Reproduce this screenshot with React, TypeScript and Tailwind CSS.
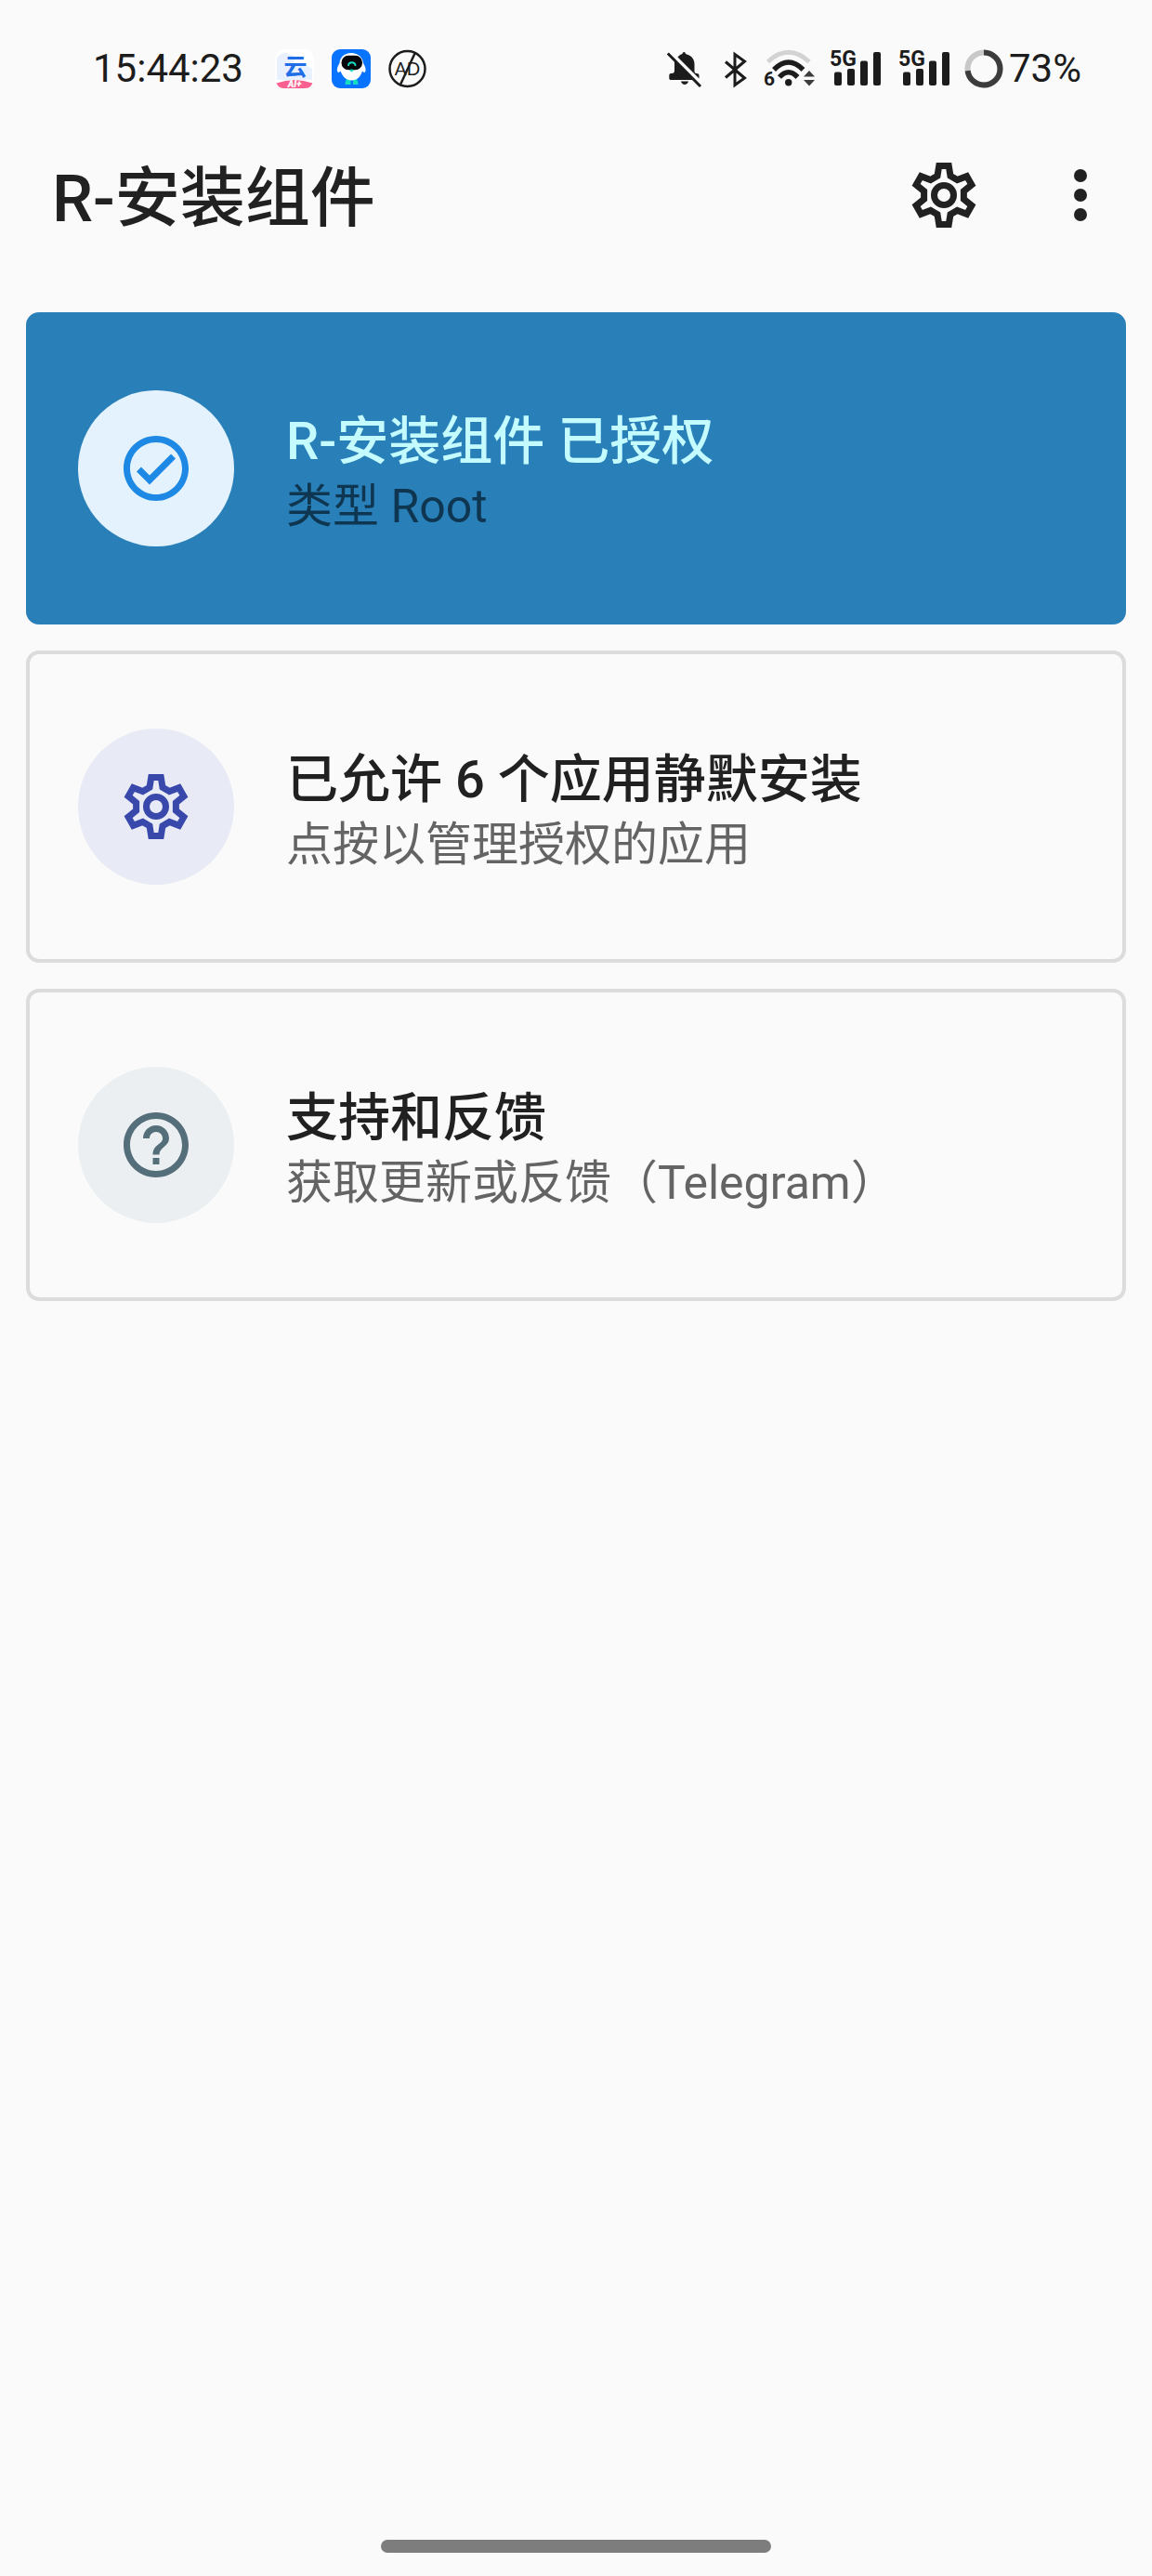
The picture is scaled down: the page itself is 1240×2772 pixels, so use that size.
import React from 'react';

interface IconProps {
  className?: string;
}

function GearIcon({ className }: IconProps) {
  return (
    <svg viewBox="-12 -12 24 24" className={className} fill="none" stroke="currentColor" strokeWidth={2} aria-hidden="true">
      <path d="M-1.5-9 1.5-9 2-5.9 4.11-4.68 7.04-5.8 8.54-3.2 6.11-1.22 6.11 1.22 8.54 3.2 7.04 5.8 4.11 4.68 2 5.9 1.5 9-1.5 9-2 5.9-4.11 4.68-7.04 5.8-8.54 3.2-6.11 1.22-6.11-1.22-8.54-3.2-7.04-5.8-4.11-4.68-2-5.9Z" />
      <circle r="3" />
    </svg>
  );
}

function MoreIcon({ className }: IconProps) {
  return (
    <svg viewBox="0 0 24 24" className={className} fill="currentColor" aria-hidden="true">
      <circle cx="12" cy="6" r="2" />
      <circle cx="12" cy="12" r="2" />
      <circle cx="12" cy="18" r="2" />
    </svg>
  );
}

function CheckIcon({ className }: IconProps) {
  return (
    <svg viewBox="0 0 24 24" className={className} fill="currentColor" aria-hidden="true">
      <path d="M12 2C6.48 2 2 6.48 2 12s4.48 10 10 10 10-4.48 10-10S17.52 2 12 2zm0 18c-4.41 0-8-3.59-8-8s3.59-8 8-8 8 3.59 8 8-3.59 8-8 8zm4.59-12.42L10 14.17l-2.59-2.58L6 13l4 4 8-8z" />
    </svg>
  );
}

function HelpIcon({ className }: IconProps) {
  return (
    <svg viewBox="0 0 24 24" className={className} fill="currentColor" aria-hidden="true">
      <path d="M11 18h2v-2h-2v2zm1-16C6.48 2 2 6.48 2 12s4.48 10 10 10 10-4.48 10-10S17.52 2 12 2zm0 18c-4.41 0-8-3.59-8-8s3.59-8 8-8 8 3.59 8 8-3.59 8-8 8zm0-14c-2.21 0-4 1.79-4 4h2c0-1.1.9-2 2-2s2 .9 2 2c0 2-3 1.75-3 5h2c0-2.25 3-2.5 3-5 0-2.21-1.79-4-4-4z" />
    </svg>
  );
}

function CloudAppIcon() {
  return (
    <svg viewBox="0 0 42 42" className="size-[42px] overflow-visible" aria-hidden="true">
      <rect width="42" height="42" rx="10" fill="#fff" />
      <path d="M2 10c3-6 10-8 15-4 6-1 6 6 2 8 6 4 16 2 21 7v12H2z" fill="#e9f1ff" />
      <text x="22" y="28" fontSize="25" fontWeight="700" textAnchor="middle" fill="#1f6ee8" fontFamily="'Noto Sans CJK SC', sans-serif">云</text>
      <path d="M1.500 36.500Q21 29.500 40.500 36.500 38 42 32 42H10Q4 42 1.500 36.500z" fill="#f9608f" />
      <text x="21" y="41" fontSize="10" fontWeight="900" fontStyle="italic" textAnchor="middle" fill="#fff" fontFamily="Roboto, sans-serif">AI+</text>
    </svg>
  );
}

function RobotAppIcon() {
  return (
    <svg viewBox="0 0 42 42" className="size-[42px]" aria-hidden="true">
      <rect width="42" height="42" rx="9" fill="#0873ff" />
      <path d="M16 32h4.500v6h-6c0-2 .5-4 1.500-6zM23 32h4c1 2 1.500 4 1.500 6H23z" fill="#17dcc4" />
      <path d="M21 4c-8 0-12 5-12.500 11-2 3-3.500 7-2 9.500 1 1 2 0 3-1C12 30 16 33.500 21.500 33.500S31 30 33 23.500c1 1 2 2 3 1 1.500-2.500 0-6.500-2-9.500C33.500 9 29 4 21 4z" fill="#fff" />
      <rect x="10.500" y="6.700" width="22.500" height="15.500" rx="7.500" fill="#06080c" />
      <path d="M18 18c0-5 7.500-5 7.500 0" fill="none" stroke="#17dcc4" strokeWidth="1.800" />
      <path d="M19 22.500q2.500-2 5 0l-2.500 2z" fill="#17dcc4" />
    </svg>
  );
}

function AdBlockIcon() {
  return (
    <svg viewBox="0 0 42 42" className="size-[42px] overflow-visible" fill="none" stroke="#1c1c1c" aria-hidden="true">
      <circle cx="20.500" cy="21" r="19" strokeWidth="2.500" />
      <text x="20.500" y="28" fontSize="19" textAnchor="middle" fill="#1c1c1c" stroke="none" fontFamily="Lato, sans-serif">AD</text>
      <path d="M28.500 4.500 13 38" strokeWidth="2.500" />
    </svg>
  );
}

function BellOffIcon() {
  return (
    <svg viewBox="0 0 38 42" className="h-[42px] w-[38px]" fill="#1c1c1c" aria-hidden="true">
      <path d="M8 12 28 33H4.500C3 33 2.300 32.500 2.300 31v-3c0-1.500 1-2 2.700-2q3 0 3-3z" />
      <path d="M11.500 8.500C13 6.500 14.500 5.700 16.500 5c0-2.700 3.500-2.700 3.500 0 5.500 1.500 9.500 5 9.500 11v7.500q0 2.500 2.500 2.500 2.500 0 2.500 2v3.500z" />
      <path d="M15 34.500h8c-1 4.500-7 4.500-8 0z" />
      <path d="M.8 4.500 36 40" stroke="#1c1c1c" strokeWidth="3" />
    </svg>
  );
}

function BluetoothIcon() {
  return (
    <svg viewBox="0 0 26 42" className="h-[42px] w-[26px]" fill="none" stroke="#1c1c1c" strokeWidth="3" aria-hidden="true">
      <path d="M1 13.500 21.500 31 11 38.500V5.500L21.500 13 1 30.500" />
    </svg>
  );
}

function WifiIcon() {
  return (
    <svg viewBox="0 0 56 42" className="h-[42px] w-[56px] overflow-visible" fill="none" aria-hidden="true">
      <path d="M4.500 13.500Q26.700-7 49 13.500" stroke="#d3d3d3" strokeWidth="5" />
      <path d="M11 22Q26.700 6 42.500 22" stroke="#1c1c1c" strokeWidth="5.500" />
      <path d="M17 30Q26.700 19.500 36.500 30" stroke="#1c1c1c" strokeWidth="5.500" />
      <circle cx="26.700" cy="35.700" r="3.700" fill="#1c1c1c" />
      <path d="M43 29.500 49 23 55 29.500zM43 33 49 39.500 55 33z" fill="#3c3c3c" />
      <text x="0" y="39" fontSize="21" fontWeight="700" fill="#1c1c1c" fontFamily="'Liberation Sans Narrow', Roboto, sans-serif">6</text>
    </svg>
  );
}

function SignalIcon() {
  return (
    <svg viewBox="0 0 54 42" className="h-[42px] w-[54px] overflow-visible" fill="#1c1c1c" aria-hidden="true">
      <rect x="4" y="24.500" width="8" height="14.500" rx="2" />
      <rect x="18" y="21" width="8" height="18" rx="2" />
      <rect x="32" y="12.500" width="8" height="26.500" rx="2" />
      <rect x="46" y="3" width="8" height="36" rx="2" />
      <text x="-1" y="18" fontSize="23" fontWeight="700" fontFamily="'Liberation Sans Narrow', Roboto, sans-serif">5G</text>
    </svg>
  );
}

function BatteryRing() {
  return (
    <svg viewBox="0 0 42 42" className="size-[42px]" fill="none" strokeWidth="6" aria-hidden="true">
      <circle cx="21" cy="21" r="17.500" stroke="#c8c8c8" />
      <circle cx="21" cy="21" r="17.500" stroke="#3c3c3c" pathLength="100" strokeDasharray="73 27" transform="rotate(-90 21 21)" />
    </svg>
  );
}

function StatusBar() {
  return (
    <div className="flex h-28 items-center justify-between pt-9 pr-[76px] pl-[100px] text-[42px] leading-none text-[#1c1c1c]">
      <div className="flex items-center">
        <span className="mr-[34px]">15:44:23</span>
        <div className="flex items-center gap-[19px]">
          <CloudAppIcon />
          <RobotAppIcon />
          <AdBlockIcon />
        </div>
      </div>
      <div className="flex items-center gap-4">
        <div className="flex items-center gap-6">
          <BellOffIcon />
          <BluetoothIcon />
        </div>
        <WifiIcon />
        <div className="flex items-center gap-5">
          <SignalIcon />
          <SignalIcon />
        </div>
        <div className="flex items-center gap-[6px]">
          <BatteryRing />
          <span>73%</span>
        </div>
      </div>
    </div>
  );
}

interface CardProps {
  icon: React.ReactNode;
  title: string;
  summary: string;
  cardClass: string;
  badgeClass: string;
  titleClass: string;
  summaryClass: string;
}

function Card({ icon, title, summary, cardClass, badgeClass, titleClass, summaryClass }: CardProps) {
  return (
    <button type="button" className={`flex w-full items-center gap-14 rounded-[14px] border-4 px-[52px] py-20 text-left ${cardClass}`}>
      <span className={`flex size-42 shrink-0 items-center justify-center rounded-full ${badgeClass}`}>{icon}</span>
      <span className="flex flex-col pt-2">
        <span className={`text-[56px] leading-[74px] font-medium ${titleClass}`}>{title}</span>
        <span className={`text-[50px] leading-[66px] ${summaryClass}`}>{summary}</span>
      </span>
    </button>
  );
}

export default function App() {
  return (
    <div className="flex min-h-screen flex-col bg-[#fafafa] font-[Roboto,'Noto_Sans_CJK_SC',sans-serif]" lang="zh-CN">
      <StatusBar />
      <header className="flex h-49 items-center justify-between pr-[35px] pl-14 text-[#212121]">
        <h1 className="pt-2 text-[70px] leading-none font-medium">R-安装组件</h1>
        <div className="flex gap-[63px]">
          <button type="button" aria-label="设置">
            <GearIcon className="size-21" />
          </button>
          <button type="button" aria-label="更多选项">
            <MoreIcon className="size-21" />
          </button>
        </div>
      </header>
      <main className="flex flex-1 flex-col gap-7 p-7">
        <Card
          icon={<CheckIcon className="size-21" />}
          title="R-安装组件 已授权"
          summary="类型 Root"
          cardClass="border-[#297fb8] bg-[#297fb8]"
          badgeClass="bg-[#e3f2fd] text-[#1e88e5]"
          titleClass="text-[#c4fbff]"
          summaryClass="text-[#0f3650]"
        />
        <Card
          icon={<GearIcon className="size-21" />}
          title="已允许 6 个应用静默安装"
          summary="点按以管理授权的应用"
          cardClass="border-[#dcdcdc]"
          badgeClass="bg-[#e8eaf6] text-[#3949ab]"
          titleClass="text-[#212121]"
          summaryClass="text-[#646464]"
        />
        <Card
          icon={<HelpIcon className="size-21" />}
          title="支持和反馈"
          summary="获取更新或反馈（Telegram）"
          cardClass="border-[#dcdcdc]"
          badgeClass="bg-[#eceff1] text-[#546e7a]"
          titleClass="text-[#212121]"
          summaryClass="text-[#646464]"
        />
      </main>
      <div className="flex justify-center pb-[25px]">
        <div className="h-[14px] w-[420px] rounded-full bg-[#7d7d7d]" />
      </div>
    </div>
  );
}
